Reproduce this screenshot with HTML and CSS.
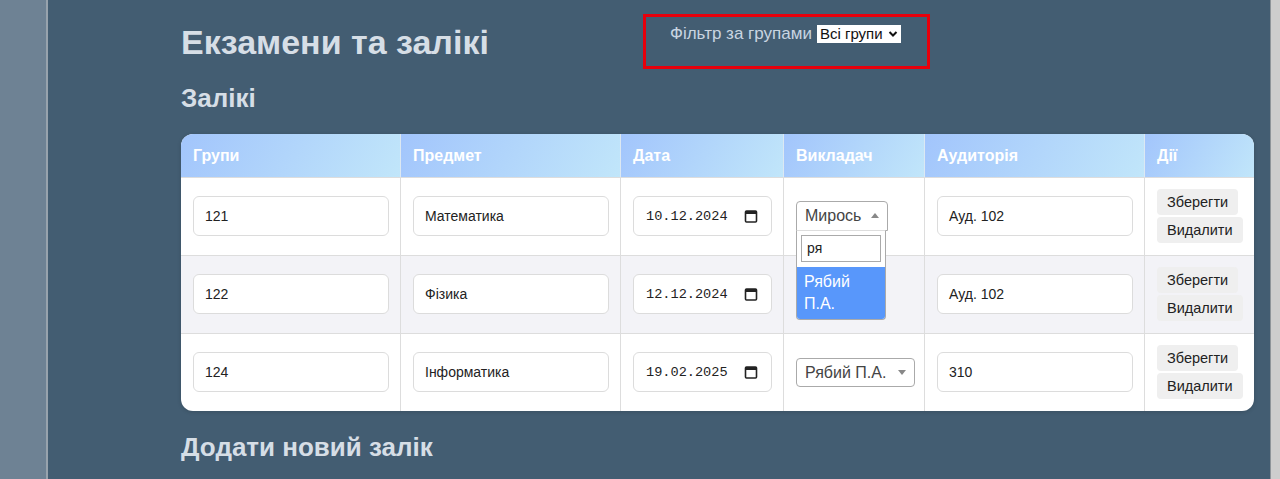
FILE: index.html
```html
<!DOCTYPE html>
<html lang="uk">
<head>
<meta charset="utf-8">
<title>Екзамени та залікі</title>
<link rel="stylesheet" href="styles.css">
</head>
<body>
<div class="sidebar"></div>
<main class="main">
  <div class="top">
    <h1 class="title">Екзамени та залікі</h1>
    <div class="filter">
      <span class="filter-label">Фільтр за групами</span>
      <span class="filter-select">Всі групи
        <svg class="chev" width="10" height="8" viewBox="0 0 10 8"><path d="M1.5 2 L5 5.5 L8.5 2" fill="none" stroke="#111" stroke-width="2"/></svg>
      </span>
    </div>
  </div>
  <h2 class="subtitle">Залікі</h2>
  <table class="grid">
    <colgroup>
      <col class="c1"><col class="c2"><col class="c3"><col class="c4"><col class="c5"><col class="c6">
    </colgroup>
    <thead>
      <tr><th>Групи</th><th>Предмет</th><th>Дата</th><th>Викладач</th><th>Аудиторія</th><th>Дії</th></tr>
    </thead>
    <tbody>
      <tr>
        <td><div class="field">121</div></td>
        <td><div class="field">Математика</div></td>
        <td><div class="field date"><span>10.12.2024</span><svg class="cal" width="14" height="14" viewBox="0 0 14 14"><rect x="1.5" y="2" width="11" height="11" rx="1" fill="none" stroke="#222" stroke-width="1.6"/><rect x="1.5" y="2" width="11" height="3" fill="#222"/></svg></div></td>
        <td>
          <div class="s2 open">
            <span class="s2-text">Мирось</span><span class="arrow up"></span>
            <div class="s2-drop">
              <div class="s2-search">ря</div>
              <div class="s2-option">Рябий П.А.</div>
            </div>
          </div>
        </td>
        <td><div class="field">Ауд. 102</div></td>
        <td><div class="actions"><button class="btn">Зберегти</button><button class="btn">Видалити</button></div></td>
      </tr>
      <tr class="alt">
        <td><div class="field">122</div></td>
        <td><div class="field">Фізика</div></td>
        <td><div class="field date"><span>12.12.2024</span><svg class="cal" width="14" height="14" viewBox="0 0 14 14"><rect x="1.5" y="2" width="11" height="11" rx="1" fill="none" stroke="#222" stroke-width="1.6"/><rect x="1.5" y="2" width="11" height="3" fill="#222"/></svg></div></td>
        <td></td>
        <td><div class="field">Ауд. 102</div></td>
        <td><div class="actions"><button class="btn">Зберегти</button><button class="btn">Видалити</button></div></td>
      </tr>
      <tr>
        <td><div class="field">124</div></td>
        <td><div class="field">Інформатика</div></td>
        <td><div class="field date"><span>19.02.2025</span><svg class="cal" width="14" height="14" viewBox="0 0 14 14"><rect x="1.5" y="2" width="11" height="11" rx="1" fill="none" stroke="#222" stroke-width="1.6"/><rect x="1.5" y="2" width="11" height="3" fill="#222"/></svg></div></td>
        <td><div class="s2 wide"><span class="s2-text">Рябий П.А.</span><span class="arrow"></span></div></td>
        <td><div class="field">310</div></td>
        <td><div class="actions"><button class="btn">Зберегти</button><button class="btn">Видалити</button></div></td>
      </tr>
    </tbody>
  </table>
  <h2 class="subtitle add">Додати новий залік</h2>
</main>
<div class="edge"></div>
</body>
</html>
```

FILE: styles.css
```css
html, body {
  margin: 0;
  padding: 0;
  height: 479px;
  overflow: hidden;
}
body {
  display: flex;
  font-family: "Liberation Sans", Arial, sans-serif;
  background: #435d72;
}
.sidebar {
  width: 46px;
  flex: none;
  background: #6e8294;
  border-right: 2px solid #98a3ad;
}
.main {
  flex: 1;
  background: #435d72;
  padding: 14px 0 0 133px;
  min-width: 0;
}
.edge {
  width: 9px;
  flex: none;
  background: #cdcdcd;
  border-left: 1px solid #8e9499;
}
.top {
  display: grid;
  grid-template-columns: 462px 287px;
  align-items: start;
}
.title {
  margin: 8px 0 0;
  font-size: 34px;
  line-height: 40px;
  font-weight: bold;
  color: #d6dee6;
}
.filter {
  box-sizing: border-box;
  height: 55px;
  border: 3px solid #e8000b;
  padding: 7px 0 0 24px;
  display: flex;
  align-items: center;
  align-self: start;
  gap: 5px;
  height: 55px;
}
.filter {
  align-items: flex-start;
}
.filter-label {
  font-size: 17px;
  line-height: 20px;
  color: #c9d5e1;
}
.filter-select {
  display: inline-flex;
  align-items: center;
  gap: 5px;
  height: 18px;
  margin-top: 1px;
  box-sizing: border-box;
  padding: 0 3px 0 3px;
  background: #fff;
  color: #111;
  font-size: 15px;
  line-height: 18px;
}
.chev { display: block; }
.subtitle {
  margin: 14px 0 0;
  font-size: 26px;
  line-height: 30px;
  font-weight: bold;
  color: #d6dee6;
}
.subtitle.add { margin-top: 21px; }
.grid {
  margin-top: 21px;
  width: 1073px;
  table-layout: fixed;
  border-collapse: separate;
  border-spacing: 0;
  background: #fff;
  border-radius: 12px;
  overflow: hidden;
  box-shadow: 0 1px 4px rgba(0,0,0,0.15);
}
.c1 { width: 220px; }
.c2 { width: 220px; }
.c3 { width: 163px; }
.c4 { width: 141px; }
.c5 { width: 220px; }
.c6 { width: 109px; }
th {
  height: 43px;
  box-sizing: border-box;
  padding: 0 11px 0 12px;
  text-align: left;
  font-size: 16px;
  line-height: 18px;
  font-weight: bold;
  color: #fff;
  background: linear-gradient(120deg, #a2c5fc 0%, #c1e6fa 100%);
  border-right: 1px solid #dce8f2;
}
thead tr { height: 43px; }
th:last-child, td:last-child { border-right: none; }
td {
  height: 78px;
  box-sizing: border-box;
  padding: 0 11px 0 12px;
  border-top: 1px solid #dddddd;
  border-right: 1px solid #dddddd;
  vertical-align: middle;
}
tr.alt td { background: #f3f3f7; }
.field {
  box-sizing: border-box;
  height: 40px;
  margin-top: -1px;
  border: 1px solid #dcdcdc;
  border-radius: 6px;
  background: #fff;
  padding: 0 11px;
  display: flex;
  align-items: center;
  font-size: 14px;
  color: #222;
}
.field.date {
  justify-content: space-between;
  font-family: "Liberation Mono", "DejaVu Sans Mono", monospace;
  font-size: 13.6px;
  padding: 0 13px 0 12px;
}
.cal { display: block; }
.s2 {
  position: relative;
  box-sizing: border-box;
  height: 30px;
  width: 92px;
  border: 1px solid #aaa;
  border-radius: 4px;
  background: #fff;
  display: flex;
  align-items: center;
  justify-content: space-between;
  padding: 0 8px 0 8px;
  font-size: 16px;
  color: #444;
}
.s2.open { border-radius: 4px 4px 0 0; margin-top: -2px; }
.s2.wide { width: 119px; height: 29px; }
.arrow {
  width: 0;
  height: 0;
  border-left: 4px solid transparent;
  border-right: 4px solid transparent;
  border-top: 5px solid #888;
}
.arrow.up {
  border-top: none;
  border-bottom: 5px solid #888;
}
.s2-drop {
  position: absolute;
  top: 28px;
  left: -1px;
  width: 90px;
  box-sizing: border-box;
  background: #fff;
  border: 1px solid #aaa;
  border-top: 1px solid #ddd;
  border-radius: 0 0 4px 4px;
  overflow: hidden;
  z-index: 5;
}
.s2-search {
  margin: 4px 4px 0;
  height: 27px;
  box-sizing: border-box;
  border: 1px solid #aaa;
  padding: 0 5px;
  font-size: 14px;
  line-height: 25px;
  color: #222;
}
.s2-option {
  margin-top: 5px;
  background: #5897fb;
  color: #fff;
  padding: 4px 7px;
  font-size: 16px;
  line-height: 22px;
}
.actions {
  display: flex;
  flex-direction: column;
  align-items: flex-start;
  gap: 2px;
  margin-top: -2px;
}
.btn {
  height: 26px;
  border: none;
  border-radius: 4px;
  background: #efefef;
  color: #222;
  font-family: "Liberation Sans", Arial, sans-serif;
  font-size: 14.5px;
  line-height: 16px;
  padding: 5px 10px;
}
```
